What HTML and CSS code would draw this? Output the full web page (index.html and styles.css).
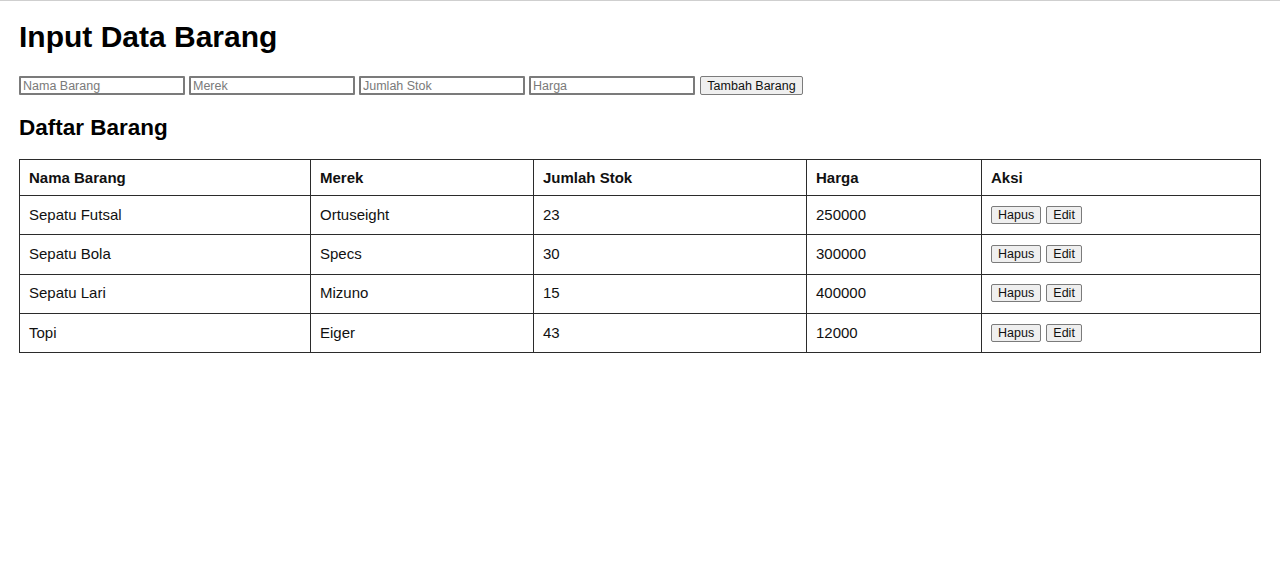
FILE: index.html
```html
<!DOCTYPE html>
<html>
	<head>
		<meta charset="UTF-8">
		<title>Input Data Barang</title>
		<link rel="stylesheet" href="styles.css">
	</head>
	<body>
		<div class="page">
			<h1>Input Data Barang</h1>
			<form class="form-barang">
				<input type="text" placeholder="Nama Barang">
				<input type="text" placeholder="Merek">
				<input type="text" placeholder="Jumlah Stok">
				<input type="text" placeholder="Harga">
				<button type="button">Tambah Barang</button>
			</form>
			<h2>Daftar Barang</h2>
			<table class="daftar">
				<thead>
					<tr>
						<th class="c1">Nama Barang</th>
						<th class="c2">Merek</th>
						<th class="c3">Jumlah Stok</th>
						<th class="c4">Harga</th>
						<th class="c5">Aksi</th>
					</tr>
				</thead>
				<tbody>
					<tr>
						<td>Sepatu Futsal</td>
						<td>Ortuseight</td>
						<td>23</td>
						<td>250000</td>
						<td><button>Hapus</button> <button>Edit</button></td>
					</tr>
					<tr>
						<td>Sepatu Bola</td>
						<td>Specs</td>
						<td>30</td>
						<td>300000</td>
						<td><button>Hapus</button> <button>Edit</button></td>
					</tr>
					<tr>
						<td>Sepatu Lari</td>
						<td>Mizuno</td>
						<td>15</td>
						<td>400000</td>
						<td><button>Hapus</button> <button>Edit</button></td>
					</tr>
					<tr>
						<td>Topi</td>
						<td>Eiger</td>
						<td>43</td>
						<td>12000</td>
						<td><button>Hapus</button> <button>Edit</button></td>
					</tr>
				</tbody>
			</table>
		</div>
	</body>
</html>
```

FILE: styles.css
```css
* {margin: 0;padding: 0;box-sizing: border-box;}
body {font-family: "Liberation Sans", Arial, sans-serif;color: #000;background: #fff;border-top: 1px solid #cfcfcf;}
.page {padding: 18px 19px;}
h1 {font-size: 30px;font-weight: bold;line-height: 35px;margin-bottom: 22px;}
h2 {font-size: 22.5px;font-weight: bold;line-height: 25px;margin: 0 0 19px;}
.form-barang {display: flex;gap: 4px;height: 19px;margin-bottom: 20px;}
.form-barang input {width: 166px;height: 19px;border: 2px solid #7b7b7b;border-radius: 1px;padding: 0 2px;font: 12.5px "Liberation Sans", Arial, sans-serif;color: #000;}
.form-barang input::placeholder {color: #7a7a7a;}
button {font: 12.5px "Liberation Sans", Arial, sans-serif;color: #111;background: #efefef;border: 1px solid #7b7b7b;border-radius: 2px;padding: 0 6px;height: 19px;}
.form-barang button {width: 103px;margin-left: 1px;}
.daftar {width: 100%;border-collapse: collapse;font-size: 15px;color: #111;}
.daftar th, .daftar td {border: 1px solid #2b2b2b;padding: 0 9px;text-align: left;vertical-align: middle;}
.daftar th {height: 36px;font-weight: bold;}
.daftar td {height: 39.3px;padding-bottom: 2px;}
.daftar td button {height: 18px;padding: 0 6px;vertical-align: middle;}
.daftar td button + button {margin-left: 1px;}
.c1 {width: 291px;}
.c2 {width: 223px;}
.c3 {width: 273px;}
.c4 {width: 175px;}
```
